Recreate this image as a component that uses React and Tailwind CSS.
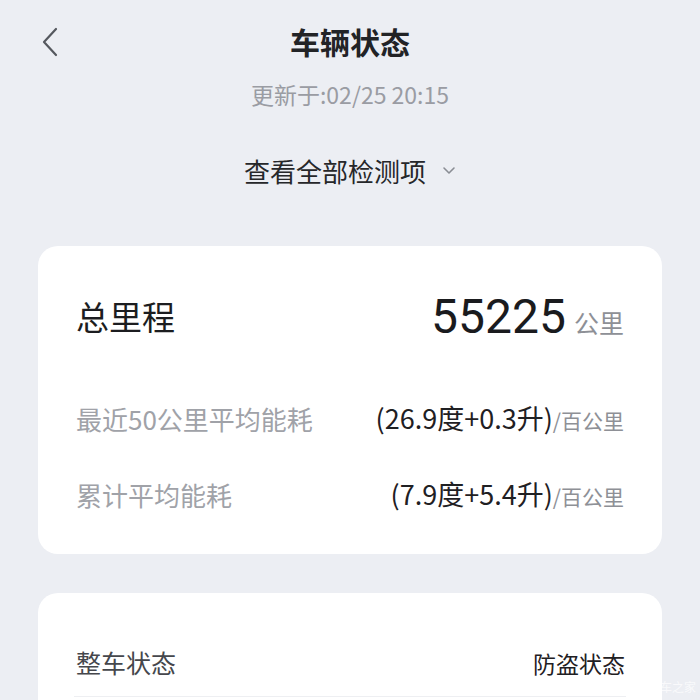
import React from 'react';

const font = { fontFamily: '"Noto Sans CJK SC", "Noto Sans", sans-serif' };

function BackIcon() {
  return (
    <svg width="20" height="32" viewBox="0 0 20 32" fill="none">
      <path d="M16 3 L4 16 L16 29" stroke="#55585e" strokeWidth="2.2" strokeLinecap="round" strokeLinejoin="round" />
    </svg>
  );
}

function ChevronDown() {
  return (
    <svg width="14" height="10" viewBox="0 0 14 10" fill="none">
      <path d="M2 2 L7 7 L12 2" stroke="#8a8d94" strokeWidth="1.6" strokeLinecap="round" strokeLinejoin="round" />
    </svg>
  );
}

function StatRow({ label, value }) {
  return (
    <div className="flex items-center justify-between h-[40px]">
      <span className="text-[26px] text-[#a0a2a8]">{label}</span>
      <span className="flex items-baseline">
        <span className="text-[27px] text-[#1f2023]">{value}</span>
        <span className="text-[21px] text-[#8e9096]">/百公里</span>
      </span>
    </div>
  );
}

export default function App() {
  return (
    <div className="w-[700px] h-[700px] overflow-hidden bg-[#eceef3] relative" style={font}>
      {/* Header */}
      <div className="relative pt-[23px] flex justify-center">
        <div className="absolute left-[40px] top-[26px]">
          <BackIcon />
        </div>
        <h1 className="text-[30px] leading-[36px] font-bold text-[#222326]">车辆状态</h1>
      </div>
      <p className="mt-[20px] text-center text-[23px] leading-[30px] text-[#9a9ca3]">更新于:02/25 20:15</p>

      <div className="mt-[45px] flex items-center justify-center gap-[16px] h-[34px]">
        <span className="text-[26px] leading-[34px] text-[#26272a]">查看全部检测项</span>
        <ChevronDown />
      </div>

      {/* Mileage card */}
      <div className="mt-[58px] mx-[38px] h-[308px] bg-white rounded-[20px] px-[38px]">
        <div className="pt-[46px] flex items-center justify-between h-[96px]">
          <span className="text-[33px] text-[#1c1d20]">总里程</span>
          <span className="flex items-baseline gap-[8px]">
            <span className="text-[48px] leading-[50px] text-[#1a1b1e]" style={{ fontFamily: 'Roboto, "Noto Sans", sans-serif' }}>55225</span>
            <span className="text-[25px] text-[#8e9096]">公里</span>
          </span>
        </div>
        <div className="mt-[56px]">
          <StatRow label="最近50公里平均能耗" value="(26.9度+0.3升)" />
        </div>
        <div className="mt-[36px]">
          <StatRow label="累计平均能耗" value="(7.9度+5.4升)" />
        </div>
      </div>

      {/* Status card */}
      <div className="mt-[39px] mx-[38px] h-[200px] bg-white rounded-[20px] px-[36px]">
        <div className="pt-[50px] flex items-center justify-between h-[90px]">
          <span className="text-[25px] text-[#45474c] pl-[2px]">整车状态</span>
          <span className="text-[23px] text-[#1f2023] pr-[1px]">防盗状态</span>
        </div>
        <div className="mt-[13px] border-t border-[#eeeff2]" />
      </div>

      <span className="absolute right-[4px] bottom-[4px] text-[12px] text-white/70">车之家</span>
    </div>
  );
}
